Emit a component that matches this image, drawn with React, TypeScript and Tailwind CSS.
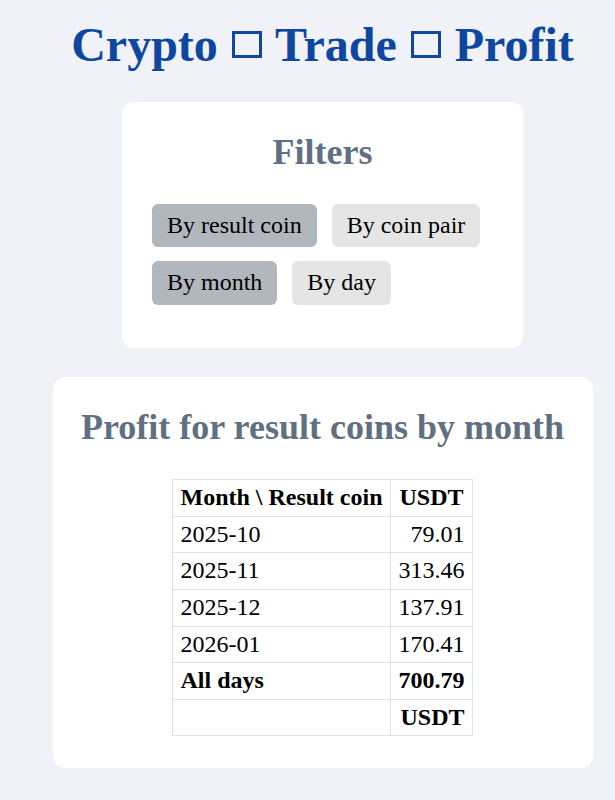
import React from "react";

const Box = () => (
  <span className="inline-block w-[30px] h-[27px] border-[3px] border-[#0d47a1] align-[3px] mx-[2px]" />
);

const rows = [
  ["2025-10", "79.01"],
  ["2025-11", "313.46"],
  ["2025-12", "137.91"],
  ["2026-01", "170.41"],
];

const cell = "border border-[#dde2e6] px-[7.5px] py-[4px]";

export default function App() {
  const serif = { fontFamily: '"Liberation Serif", "Times New Roman", serif' };
  return (
    <div
      className="min-h-[800px] w-[615px] bg-[#f1f2f7] pl-[30px] pt-[17px] flex flex-col items-center text-black"
      style={serif}
    >
      <h1 className="text-[48px] font-bold text-[#0d47a1] leading-[1.15] whitespace-nowrap">
        Crypto <Box /> Trade <Box /> Profit
      </h1>

      <div className="mt-[30px] w-[401px] bg-white rounded-[12px] pt-[30px] px-[30px] pb-[43px]">
        <h2 className="text-[36px] font-bold text-[#607080] leading-[1.15] text-center">Filters</h2>
        <div className="mt-[30px] flex flex-wrap gap-x-[15px] gap-y-[14px] text-[24px] leading-[1.15]">
          <button className="bg-[#b0b7bd] rounded-[6px] px-[15px] py-[8px]">By result coin</button>
          <button className="bg-[#e5e5e5] rounded-[6px] px-[15px] py-[8px]">By coin pair</button>
          <button className="bg-[#b0b7bd] rounded-[6px] px-[15px] py-[8px]">By month</button>
          <button className="bg-[#e5e5e5] rounded-[6px] px-[15px] py-[8px]">By day</button>
        </div>
      </div>

      <div className="mt-[29px] w-[540px] bg-white rounded-[12px] pt-[30px] px-[30px] pb-[32px] flex flex-col items-center">
        <h2 className="text-[36px] font-bold text-[#607080] leading-[1.15] text-center whitespace-nowrap">
          Profit for result coins by month
        </h2>
        <table className="mt-[31px] border-collapse text-[24px] leading-[1.15]">
          <thead>
            <tr>
              <th className={`${cell} text-left font-bold`}>Month \ Result coin</th>
              <th className={`${cell} text-center font-bold`}>USDT</th>
            </tr>
          </thead>
          <tbody>
            {rows.map(([m, v]) => (
              <tr key={m}>
                <td className={cell}>{m}</td>
                <td className={`${cell} text-right`}>{v}</td>
              </tr>
            ))}
            <tr>
              <td className={`${cell} font-bold`}>All days</td>
              <td className={`${cell} text-right font-bold`}>700.79</td>
            </tr>
            <tr>
              <td className={cell}></td>
              <td className={`${cell} text-right font-bold`}>USDT</td>
            </tr>
          </tbody>
        </table>
      </div>
    </div>
  );
}
